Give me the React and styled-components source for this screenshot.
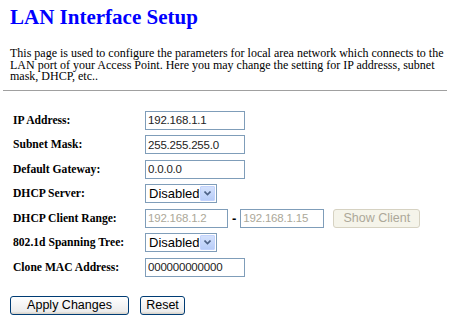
import styled, { createGlobalStyle } from "styled-components";

const Global = createGlobalStyle`
    body { margin: 0; background: #fff; font-family: "Liberation Serif", "Times New Roman", serif; }
`;

const Page = styled.div`
    padding: 4px 0 0 10px;
`;

const Title = styled.h1`
    margin: 0; color: #0000ff;
    font-size: 21px; font-weight: bold; line-height: 26px;
`;

const Intro = styled.p`
    margin: 18px 0 0; font-size: 12px; line-height: 11.5px;
    color: #000; width: 436px;
`;

const Rule = styled.hr`
    margin: 7px 3px 0 -7px; border: none; border-top: 1px solid #a0a0a0;
`;

const Form = styled.div`
    display: grid; grid-template-columns: 132px auto;
    grid-auto-rows: 19px; row-gap: 5.5px; align-items: center;
    margin: 20px 0 0 3px;
`;

const Label = styled.div`
    font-size: 11.6px; font-weight: bold;
`;

const Field = styled.div`
    display: flex; align-items: center;
`;

const Input = styled.input`
    box-sizing: border-box; width: ${p => p.$w || 100}px; height: 19px;
    border: 1px solid #7f9db9; padding: 0 2px; margin: 0;
    font-family: "Liberation Sans", Arial, sans-serif; font-size: 11.5px;
    letter-spacing: -0.2px;
    color: ${p => (p.disabled ? "#aca899" : "#222")};
    background: #fff;
`;

const Dash = styled.span`
    font-family: "Liberation Sans", Arial, sans-serif; font-weight: bold;
    font-size: 13px; margin: 0 4px;
`;

const SelectBox = styled.div`
    box-sizing: border-box; width: 72px; height: 19px;
    border: 1px solid #7f9db9; display: flex; align-items: center;
    justify-content: space-between; padding: 0 1px 0 3px;
    font-family: "Liberation Sans", Arial, sans-serif; font-size: 13px;
`;

const Arrow = styled.span`
    width: 17px; height: 15px; background: linear-gradient(#d4e1fc, #b8cdf8);
    border: 1px solid #c3d3fd; box-sizing: border-box; border-radius: 1px;
    display: flex; align-items: center; justify-content: center;
`;

const Button = styled.button`
    box-sizing: border-box; height: ${p => p.$h || 19}px; width: ${p => p.$w}px;
    margin: 0 0 0 ${p => p.$ml || 0}px; padding: 0;
    font-family: "Liberation Sans", Arial, sans-serif; font-size: 12.5px;
    color: ${p => (p.disabled ? "#aca899" : "#000")};
    border: 1px solid ${p => (p.disabled ? "#d6d2c2" : "#003c74")};
    border-radius: 3px;
    background: ${p => (p.disabled ? "#f5f4ea" : "linear-gradient(#fff, #ececec 85%, #d6d0c5)")};
`;

const Actions = styled.div`
    display: flex; margin: 19px 0 0 0;
`;

function Select({ value }) {
    return (
        <SelectBox>
            {value}
            <Arrow>
                <svg width="7" height="5" viewBox="0 0 7 5">
                    <path d="M0.5 0.5 L3.5 3.5 L6.5 0.5" stroke="#4d6185" strokeWidth="1.6" fill="none" />
                </svg>
            </Arrow>
        </SelectBox>
    );
}

export default function App() {
    return (
        <Page>
            <Global />
            <Title>LAN Interface Setup</Title>
            <Intro>
                This page is used to configure the parameters for local area network which connects to the
                LAN port of your Access Point. Here you may change the setting for IP addresss, subnet
                mask, DHCP, etc..
            </Intro>
            <Rule />
            <Form>
                <Label>IP Address:</Label>
                <Field><Input defaultValue="192.168.1.1" /></Field>
                <Label>Subnet Mask:</Label>
                <Field><Input defaultValue="255.255.255.0" /></Field>
                <Label>Default Gateway:</Label>
                <Field><Input defaultValue="0.0.0.0" /></Field>
                <Label>DHCP Server:</Label>
                <Field><Select value="Disabled" /></Field>
                <Label>DHCP Client Range:</Label>
                <Field>
                    <Input $w={83} disabled defaultValue="192.168.1.2" />
                    <Dash>-</Dash>
                    <Input $w={84} disabled defaultValue="192.168.1.15" />
                    <Button $w={87} $ml={9} disabled>Show Client</Button>
                </Field>
                <Label>802.1d Spanning Tree:</Label>
                <Field><Select value="Disabled" /></Field>
                <Label>Clone MAC Address:</Label>
                <Field><Input defaultValue="000000000000" /></Field>
            </Form>
            <Actions>
                <Button $w={119}>Apply Changes</Button>
                <Button $w={45} $ml={11}>Reset</Button>
            </Actions>
        </Page>
    );
}
